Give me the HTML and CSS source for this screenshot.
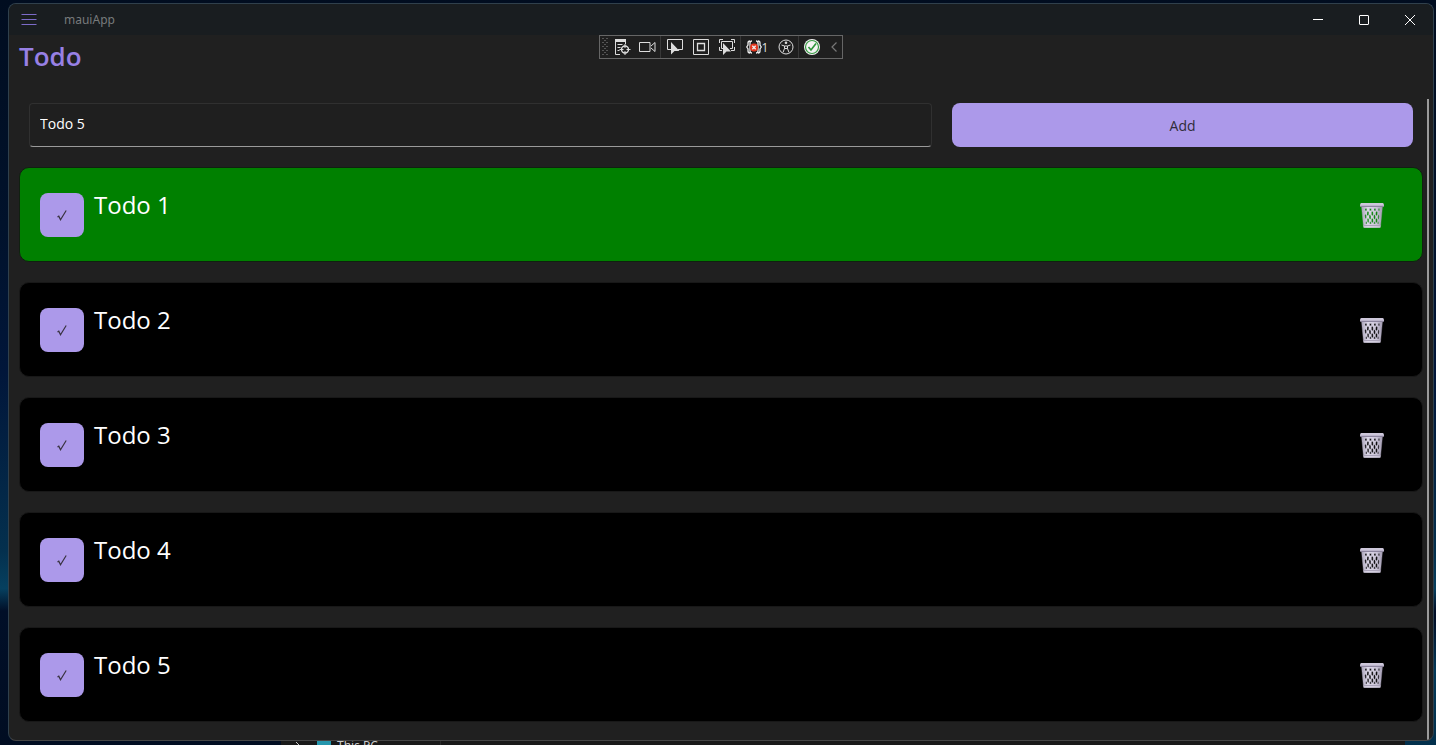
FILE: index.html
```html
<!DOCTYPE html>
<html lang="en">
<head>
<meta charset="utf-8">
<title>mauiApp</title>
<link rel="stylesheet" href="styles.css">
</head>
<body>
<svg class="defs" aria-hidden="true">
  <defs>
    <linearGradient id="metal" x1="0" x2="1" y1="0" y2="0">
      <stop offset="0" stop-color="#a9a3b8"/><stop offset=".3" stop-color="#dcd7e8"/><stop offset=".7" stop-color="#cbc5d8"/><stop offset="1" stop-color="#a19ab0"/>
    </linearGradient>
    <symbol id="trash" viewBox="0 0 24 25">
      <path fill="url(#metal)" stroke="url(#metal)" stroke-width=".4" fill-rule="evenodd" d="M1.500 3h21l-2 20.500q-.1 1-1 1h-15q-.9 0-1-1z
        M5 5.500h1.800v2.200h-1.800z M9.500 5.500h1.800v2.200h-1.800z M14 5.500h1.800v2.200h-1.800z M18.300 5.500h1.300v2.200h-1.300z
        M8 8l.9 1.500-.2 2.500-.9 1-.9-1.500.2-2.500z M12.300 8l.9 1.500v2.500l-.9 1-.9-1.500v-2.500z M16.700 8l.9 1.500-.3 2.500-.9 1-.9-1.500.3-2.500z
        M5.500 11l.9 1.500v2.500l-.7 1-.7-1.500-.2-2.500z M10 11.500l.9 1.500v2.500l-.9 1-.9-1.500v-2.500z M14.500 11.500l.9 1.500v2.500l-.9 1-.9-1.500v-2.500z M18.700 11.500l.5 1.500-.2 2.500-.8 1-.4-1.500.2-2.500z
        M8 15l.9 1.500v2.500l-.7 1-.9-1.500-.1-2.500z M12.300 15l.9 1.500v2.500l-.9 1-.9-1.500v-2.500z M16.500 15l.9 1.500-.2 2.500-.9 1-.8-1.500.1-2.500z
        M5.700 18.800h1.300v2.200h-1.200z M9.700 18.800h1.500v2.200h-1.500z M13.800 18.800h1.500v2.200h-1.500z M17.500 18.800h1.200l-.1 2.200h-1.100z"/>
      <rect x="0" y="0" width="24" height="4" rx="1.500" fill="#bdb6cc"/>
      <path d="M1 1h22" stroke="#ddd8e8"/>
      <path d="M1 3.500h22" stroke="#8d859f"/>
      <path d="M3.500 22.500h17" stroke="#aaa3b9"/>
      <path d="M3.500 24h17" stroke="#d6d0e2"/>
    </symbol>
    <symbol id="check" viewBox="0 0 12 14">
      <path d="M1.500 9l1.300-.8 1.700 3.600L10.200 2.500" fill="none" stroke="#38323f" stroke-width="1.200"/>
    </symbol>
  </defs>
</svg>

<div class="desktop">
  <div class="explorer">
    <svg width="8" height="12" viewBox="0 0 8 12"><path d="M2 1l4 4-4 4" fill="none" stroke="#ccc"/></svg>
    <span class="pc-icon"></span>
    <span class="pc-name">This PC</span>
  </div>

  <div class="window">
    <header class="titlebar">
      <button class="menu" aria-label="Menu"><svg width="16" height="12" viewBox="0 0 16 12"><path d="M.5 .5h15M.5 5.500h15M.5 10.500h15" stroke="#7c6bc8"/></svg></button>
      <span class="app-name">mauiApp</span>
      <button class="caption" aria-label="Minimize"><svg width="12" height="12"><path d="M1 5.500h10" stroke="#fff"/></svg></button>
      <button class="caption" aria-label="Maximize"><svg width="12" height="12"><rect x="1.500" y="1.500" width="9" height="9" rx=".5" fill="none" stroke="#fff"/></svg></button>
      <button class="caption" aria-label="Close"><svg width="12" height="12"><path d="M1 1l10 10M11 1L1 11" stroke="#fff"/></svg></button>
    </header>

    <div class="debugbar">
      <svg class="grip" width="6" height="18" viewBox="0 0 6 18" stroke="#555" stroke-dasharray="2 2"><path d="M0 .5h6M0 4.500h6M0 8.500h6M0 12.500h6M0 16.500h6"/><path stroke-dashoffset="2" d="M0 2.500h6M0 6.500h6M0 10.500h6M0 14.500h6"/></svg>
      <button class="narrow" aria-label="Live visual tree"><svg width="18" height="18" viewBox="0 0 18 18" fill="none" stroke="#ddd"><path d="M1 2.500h11" stroke-width="3"/><path d="M1.500 4v12.500H6M11.500 4v2M3.500 6.500h5M3.500 9.500h3M3.500 12.500h2"/><circle cx="11" cy="11.500" r="3.500" stroke-width="1.400"/><path d="M11 6v4M11 13v4M5.500 11.500h4M12.500 11.500h4"/></svg></button>
      <button class="narrow" aria-label="Record"><svg width="18" height="18" viewBox="0 0 18 18" fill="none" stroke="#ddd"><path d="M.5 4.500h10.500v9h-10.500zM12 8l4-3.500v9L12 10"/></svg></button>
      <i class="rule"></i>
      <button aria-label="Select element"><svg width="18" height="18" viewBox="0 0 18 18"><path d="M5 11.500H1.500v-10h15v10H12" fill="none" stroke="#ddd"/><path d="M5 4v12.500l3.500-3.500h5z" fill="#ddd"/></svg></button>
      <button aria-label="Layout adorners"><svg width="18" height="18" viewBox="0 0 18 18" fill="none" stroke="#ddd"><path d="M1.500 1.500h15v15h-15z"/><path d="M5.500 5.500h7v7h-7z" stroke-width="1.300"/></svg></button>
      <button aria-label="Track focus"><svg width="18" height="18" viewBox="0 0 18 18"><path d="M1.500 5V1.500H5M13 1.500h3.500V5M16.500 9v3.500H13M1.500 9v3.500H4M5 10.500H3.500v-7h11v7H12" fill="none" stroke="#ddd"/><path d="M5 5v12l3.500-3.500H13z" fill="#ddd"/></svg></button>
      <i class="rule"></i>
      <button class="failures" aria-label="Binding failures: 1"><svg width="16" height="18" viewBox="0 0 16 18" fill="none" stroke="#eee" stroke-width="1.300"><path d="M4 3Q2 3 2 5v2L.7 9 2 11v2q0 2 2 2M6 3Q4 3 4 5v8q0 2 2 2M12 3q2 0 2 2v2l1.300 2L14 11v2q0 2-2 2M10 3q2 0 2 2v8q0 2-2 2"/><circle cx="8" cy="9.500" r="4" fill="#e5371f" stroke="none"/><path d="M6.300 7.800l3.400 3.400M9.700 7.800l-3.400 3.400"/></svg><span>1</span></button>
      <button class="narrow" aria-label="Accessibility"><svg width="18" height="18" viewBox="0 0 18 18" fill="none" stroke="#ddd"><circle cx="9" cy="9" r="7"/><circle cx="9" cy="4.800" r="1.300" fill="#ddd" stroke="none"/><path d="M4.500 7l3 1v2.500L6 14.500M13.500 7l-3 1v2.500l1.500 4M7.500 8h3M7.500 10.500h3"/></svg></button>
      <i class="rule"></i>
      <button aria-label="Hot reload"><svg width="18" height="18" viewBox="0 0 18 18"><circle cx="9" cy="9" r="8" fill="#f4f4f4"/><circle cx="9" cy="9" r="6.500" fill="none" stroke="#379a43" stroke-width="1.200"/><path d="M5.500 9l2.500 3 5-6.500" fill="none" stroke="#2f953c" stroke-width="1.700"/></svg></button>
      <button class="collapse" aria-label="Collapse"><svg width="8" height="12" viewBox="0 0 8 12"><path d="M6.500 1.500L2 6l4.500 4.500" fill="none" stroke="#777" stroke-width="1.200"/></svg></button>
    </div>

    <h1 class="page-title">Todo</h1>

    <main class="scroller">
      <form class="add-form">
        <input class="entry" type="text" value="Todo 5" aria-label="New todo">
        <button class="add" type="button">Add</button>
      </form>
      <ul class="todos">
        <li class="todo done"><button class="tick" aria-label="Complete"><svg width="12" height="14"><use href="#check"/></svg></button><span class="name">Todo 1</span><button class="delete" aria-label="Delete"><svg width="24" height="25"><use href="#trash"/></svg></button></li>
        <li class="todo"><button class="tick" aria-label="Complete"><svg width="12" height="14"><use href="#check"/></svg></button><span class="name">Todo 2</span><button class="delete" aria-label="Delete"><svg width="24" height="25"><use href="#trash"/></svg></button></li>
        <li class="todo"><button class="tick" aria-label="Complete"><svg width="12" height="14"><use href="#check"/></svg></button><span class="name">Todo 3</span><button class="delete" aria-label="Delete"><svg width="24" height="25"><use href="#trash"/></svg></button></li>
        <li class="todo"><button class="tick" aria-label="Complete"><svg width="12" height="14"><use href="#check"/></svg></button><span class="name">Todo 4</span><button class="delete" aria-label="Delete"><svg width="24" height="25"><use href="#trash"/></svg></button></li>
        <li class="todo"><button class="tick" aria-label="Complete"><svg width="12" height="14"><use href="#check"/></svg></button><span class="name">Todo 5</span><button class="delete" aria-label="Delete"><svg width="24" height="25"><use href="#trash"/></svg></button></li>
      </ul>
    </main>
  </div>
</div>
</body>
</html>
```
FILE: styles.css
```css
* { box-sizing: border-box; }
body { margin: 0; font-family: "Open Sans", "Noto Sans", sans-serif; color: #fff; }
button { margin: 0; padding: 0; border: 0; background: none; color: inherit; font: inherit; }
svg { display: block; flex: none; }
.defs { position: absolute; width: 0; height: 0; }

.desktop {
  position: relative;
  display: flex;
  height: 100vh;
  padding: 3px 2px 4px 8px;
  overflow: hidden;
  background:
    linear-gradient(to bottom, transparent 0 83%, #033a5a 90%, #02304c) right / 50% 100% no-repeat,
    linear-gradient(to bottom, #010d20 0, #01122b 30%, #01163a 50%, #04304e 74%, #06405f 79%, #010f28 82%, #010d22 100%);
}

.window {
  position: relative;
  flex: 1;
  display: flex;
  flex-direction: column;
  min-width: 0;
  overflow: hidden;
  border: 1px solid #30404c;
  border-bottom-color: #454545;
  border-radius: 8px;
  background: #202020;
}

.titlebar { display: flex; align-items: center; flex: none; height: 31px; background: #191d20; }
.menu { display: grid; place-items: center; width: 40px; height: 31px; }
.app-name { flex: 1; padding-left: 15px; font-family: "Noto Sans", sans-serif; font-size: 12px; color: #777a7c; }
.caption { display: grid; place-items: center; width: 46px; height: 31px; }

.debugbar {
  position: absolute;
  top: 31px;
  left: 50%;
  display: flex;
  align-items: center;
  width: 244px;
  height: 24px;
  padding-left: 2px;
  transform: translateX(-50%);
  border: 1px solid #666;
  background: #1f1f1f;
}
.debugbar button { display: grid; place-items: center; width: 26px; height: 22px; }
.debugbar .narrow { width: 25px; }
.debugbar .grip { margin-right: 2px; }
.debugbar .rule { width: 1px; height: 22px; background: #383838; }
.debugbar .rule:first-of-type { margin-right: 1px; }
.debugbar .failures { display: flex; align-items: center; justify-content: center; width: 32px; font-size: 12px; color: #ddd; }
.debugbar .collapse { flex: 1; }

.page-title {
  flex: none;
  height: 64px;
  margin: 0;
  padding-left: 10px;
  font-size: 26px;
  font-weight: 600;
  line-height: 42px;
  color: #9880e5;
}

.scroller {
  flex: 1;
  min-height: 0;
  padding: 4px 4px 0 10px;
  margin-right: 4px;
  border-right: 2px solid #9a9a9a;
  overflow: hidden;
}
.add-form { display: grid; grid-template-columns: 1.96fr 1fr; gap: 20px; padding: 0 10px; }
.entry {
  min-width: 0;
  height: 44px;
  padding: 0 10px 4px;
  border: 1px solid #303030;
  border-bottom-color: #9a9a9a;
  border-radius: 4px;
  outline: 0;
  background: #1f1f1f;
  font: 14px "Open Sans", "Noto Sans", sans-serif;
  color: #fff;
}
.add { height: 44px; border-radius: 8px; background: #ac99ea; font-size: 14px; color: #302c38; }

.todos { display: grid; gap: 20px; margin: 20px 0 0; padding: 0; list-style: none; }
.todo {
  display: flex;
  align-items: center;
  gap: 10px;
  height: 95px;
  padding: 0 38px 0 20px;
  border: 1px solid #181818;
  border-radius: 10px;
  background: #000;
}
.todo.done { border-color: #102010; background: #008000; }
.tick { display: grid; place-items: center; width: 44px; height: 44px; border-radius: 8px; background: #ac99ea; }
.name { flex: 1; align-self: flex-start; padding-top: 20px; font-size: 24px; line-height: 34px; }
.delete { padding-top: 1px; }

.explorer {
  position: absolute;
  left: 281px;
  right: 31px;
  bottom: -12px;
  display: flex;
  align-items: center;
  gap: 15px;
  height: 20px;
  padding-left: 13px;
  background: linear-gradient(to right, #191919 0 159px, #2a2a2a 159px 160px, #191919 160px);
}
.pc-icon { width: 14px; height: 16px; margin-right: -9px; background: #2596ad; }
.pc-name { padding-bottom: 2px; font-family: "Noto Sans", sans-serif; font-size: 12px; line-height: 16px; color: #ccc; }
```
